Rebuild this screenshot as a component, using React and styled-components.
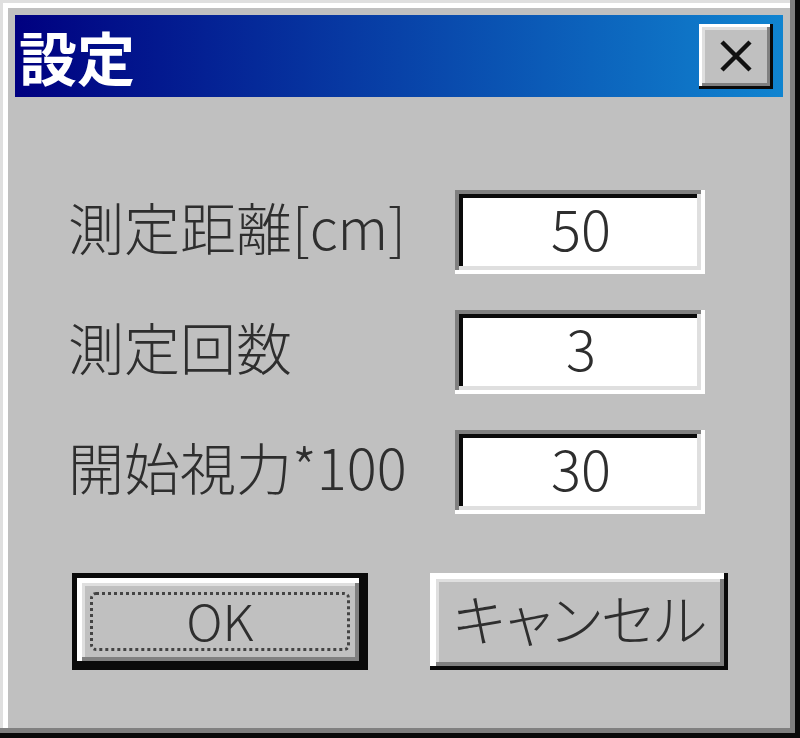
import React from 'react';
import styled, { createGlobalStyle } from 'styled-components';

const GlobalStyle = createGlobalStyle`
  html, body {
    margin: 0;
    padding: 0;
    background: #c0c0c0;
  }
  body {
    font-family: "Noto Sans CJK JP", "Liberation Sans", sans-serif;
  }
`;

const Window = styled.div`
  box-sizing: border-box;
  width: 800px;
  height: 738px;
  padding: 15px 17px 17px 15px;
  background: #c0c0c0;
  box-shadow:
    inset -5px -5px #0a0a0a,
    inset -10px -10px #808080,
    inset 3px 3px #dfdfdf,
    inset 8px 8px #ffffff;
  display: flex;
  flex-direction: column;
`;

const TitleBar = styled.div`
  height: 82px;
  display: flex;
  align-items: center;
  justify-content: space-between;
  padding: 0 10px 0 4px;
  background: linear-gradient(90deg, #000080, #1084d0);
`;

const Title = styled.span`
  color: #ffffff;
  font-family: "Noto Sans CJK JP", sans-serif;
  font-weight: 700;
  font-size: 58px;
  line-height: 1;
`;

const CloseButton = styled.button`
  width: 74px;
  height: 65px;
  padding: 0;
  border: none;
  background: #c0c0c0;
  display: flex;
  align-items: center;
  justify-content: center;
  box-shadow:
    inset -3px -3px #0a0a0a,
    inset 3px 3px #ffffff,
    inset -6px -6px #808080,
    inset 6px 6px #dfdfdf;
`;

const Body = styled.div`
  padding-top: 93px;
`;

const FormGrid = styled.div`
  display: grid;
  grid-template-columns: 387px 250px;
  grid-auto-rows: 84px;
  row-gap: 36px;
  align-items: center;
  margin-left: 53px;
`;

const Label = styled.label`
  font-family: "Noto Sans CJK JP", sans-serif;
  font-size: 56px;
  font-weight: 300;
  line-height: 1;
  padding-bottom: 12px;
  color: #2e2e2e;
  white-space: nowrap;
`;

const Field = styled.input`
  box-sizing: border-box;
  width: 250px;
  height: 84px;
  margin: 0;
  padding: 0 0 12px 2px;
  border: none;
  outline: none;
  background: #ffffff;
  text-align: center;
  font-family: "Noto Sans CJK JP", sans-serif;
  font-weight: 300;
  font-size: 56px;
  color: #2e2e2e;
  box-shadow:
    inset -4px -4px #ffffff,
    inset 4px 4px #808080,
    inset -8px -8px #dfdfdf,
    inset 8px 8px #0a0a0a;
`;

const ButtonRow = styled.div`
  display: flex;
  gap: 62px;
  margin-top: 59px;
  margin-left: 57px;
`;

const Button = styled.button`
  box-sizing: border-box;
  width: ${(p) => (p.$wide ? '298px' : '296px')};
  height: 97px;
  padding: ${(p) => (p.$default ? '19px 18px' : '0 0 10px 2px')};
  margin: 0;
  border: none;
  background: #c0c0c0;
  color: #2e2e2e;
  font-family: "Noto Sans CJK JP", sans-serif;
  font-weight: 300;
  font-size: ${(p) => (p.$default ? '50px' : '56px')};
  font-feature-settings: "palt";
  line-height: 1;
  display: flex;
  align-items: center;
  justify-content: center;
  box-shadow: ${(p) =>
    p.$default
      ? `inset 0 0 0 5px #0a0a0a,
         inset -9px -9px #0a0a0a,
         inset 10px 10px #ffffff,
         inset -13px -13px #808080,
         inset 13px 13px #dfdfdf`
      : `inset -4px -4px #0a0a0a,
         inset 6px 6px #ffffff,
         inset -8px -8px #808080,
         inset 9px 9px #dfdfdf`};
`;

const FocusRing = styled.span`
  box-sizing: border-box;
  flex: 1;
  align-self: stretch;
  display: flex;
  align-items: center;
  justify-content: center;
  padding-bottom: 6px;
  border: 3px dotted #444;
  border-radius: 6px;
`;

const fields = [
  { label: '測定距離[cm]', value: '50' },
  { label: '測定回数', value: '3' },
  { label: '開始視力*100', value: '30' },
];

const App = () => {
  return (
    <>
      <GlobalStyle />
      <Window>
        <TitleBar>
          <Title>設定</Title>
          <CloseButton aria-label="閉じる">
            <svg width="34" height="34" viewBox="0 0 34 34">
              <path d="M3 3 L31 31 M31 3 L3 31" stroke="#111" strokeWidth="4.5" />
            </svg>
          </CloseButton>
        </TitleBar>
        <Body>
          <FormGrid>
            {fields.map((f) => (
              <React.Fragment key={f.label}>
                <Label>{f.label}</Label>
                <Field defaultValue={f.value} readOnly />
              </React.Fragment>
            ))}
          </FormGrid>
          <ButtonRow>
            <Button $default>
              <FocusRing>OK</FocusRing>
            </Button>
            <Button $wide>キャンセル</Button>
          </ButtonRow>
        </Body>
      </Window>
    </>
  );
};

export default App;
